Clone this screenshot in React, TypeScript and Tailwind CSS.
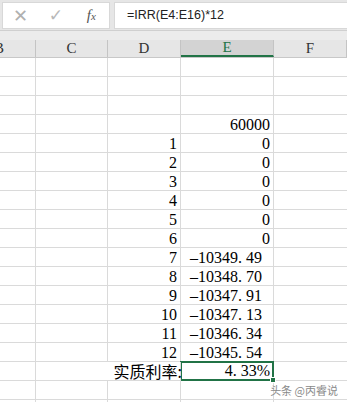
import React from "react";

type Cell = { d?: string; e?: string; neg?: boolean };

const rows: Cell[] = [
  {},
  {},
  {},
  { e: "60000" },
  { d: "1", e: "0" },
  { d: "2", e: "0" },
  { d: "3", e: "0" },
  { d: "4", e: "0" },
  { d: "5", e: "0" },
  { d: "6", e: "0" },
  { d: "7", e: "-10349.49", neg: true },
  { d: "8", e: "-10348.70", neg: true },
  { d: "9", e: "-10347.91", neg: true },
  { d: "10", e: "-10347.13", neg: true },
  { d: "11", e: "-10346.34", neg: true },
  { d: "12", e: "-10345.54", neg: true },
];

// SimSun-like: minus and period take a full digit width
function Num({ v }: { v: string }) {
  return (
    <span>
      {v.split("").map((ch, i) =>
        ch === "-" ? (
          <span key={i} className="inline-block w-[8px] text-center">–</span>
        ) : ch === "." ? (
          <span key={i} className="inline-block w-[8px] text-left">.</span>
        ) : (
          <span key={i}>{ch}</span>
        )
      )}
    </span>
  );
}

const cols = ["B", "C", "D", "E", "F"];
const gridCols = "grid grid-cols-[36px_72px_73px_93px_73px]";
const serif = "font-['Liberation_Serif','DejaVu_Serif',serif]";
const cjk = "font-['Noto_Sans_CJK_SC',sans-serif]";

export default function App() {
  return (
    <div className={`w-[347px] h-[402px] overflow-hidden bg-white relative ${serif}`}>
      {/* Formula bar */}
      <div className="h-[31px] bg-[#e6e6e6] flex pt-[2px] pl-[2px] border-b border-[#d0d0d0]">
        <div className="w-[108px] h-[27px] bg-white border border-[#d8d8d8] flex items-center font-['DejaVu_Sans',sans-serif]">
          <span className="w-[36px] text-center text-[#b0b0b0] text-[18px] leading-none">✕</span>
          <span className="w-[36px] text-center text-[#b8b8b8] text-[17px] leading-none">✓</span>
          <span className={`w-[36px] text-center text-[#555] text-[15px] italic leading-none ${serif}`}>
            f<span className="text-[11px]">x</span>
          </span>
        </div>
        <div className="flex-1 h-[27px] ml-[4px] bg-white border border-[#d8d8d8] border-r-0 flex items-center pl-[12px]">
          <span className="text-[12.5px] text-[#222] font-['Liberation_Sans',sans-serif]">=IRR(E4:E16)*12</span>
        </div>
      </div>
      <div className="h-[9px] bg-[#ececec]" />

      {/* Column headers */}
      <div className={`${gridCols} h-[18px] bg-[#e6e6e6] border-b border-[#c8c8c8]`}>
        {cols.map((c, i) => (
          <div
            key={c}
            className={`flex items-center text-[15px] leading-none border-r border-[#c4c4c4] ${
              c === "E" ? "bg-[#d3d3d3] text-[#217346] border-b-2 border-b-[#217346]" : "text-[#333]"
            } ${i === 0 ? "justify-end pr-[31px]" : "justify-center"}`}
          >
            {c}
          </div>
        ))}
      </div>

      {/* Grid */}
      <div className="text-[16px] text-black">
        {rows.map((r, i) => (
          <div key={i} className={`${gridCols} h-[19px]`}>
            <div className="border-r border-b border-[#dadada]" />
            <div className="border-r border-b border-[#dadada]" />
            <div className="border-r border-b border-[#dadada] flex items-end justify-end pr-[3px] leading-[17px]">{r.d}</div>
            <div className={`border-r border-b border-[#dadada] flex items-end justify-end leading-[17px] ${r.neg ? "pr-[11px]" : "pr-[3px]"}`}>
              {r.e ? <Num v={r.e} /> : null}
            </div>
            <div className="border-b border-[#dadada]" />
          </div>
        ))}

        {/* Result row */}
        <div className={`${gridCols} h-[19px]`}>
          <div className="border-r border-b border-[#dadada]" />
          <div className="border-b border-[#dadada]" />
          <div className="relative z-10 border-r border-b border-[#dadada] flex items-end justify-end whitespace-nowrap">
            <span className={`text-[16px] leading-[17px] -mr-[2px] ${cjk}`}>实质利率:</span>
          </div>
          <div className="relative border-2 border-[#217346] -ml-[1px] -mt-[1px] h-[20px] flex items-end justify-end pr-[2px] leading-[17px]">
            <Num v="4.33%" />
            <div className="absolute -right-[4px] -bottom-[4px] w-[6px] h-[6px] bg-[#217346] border border-white" />
          </div>
          <div className="border-b border-[#dadada]" />
        </div>

        {[0, 1].map((k) => (
          <div key={k} className={`${gridCols} h-[19px]`}>
            <div className="border-r border-b border-[#dadada]" />
            <div className="border-r border-b border-[#dadada]" />
            <div className="border-r border-b border-[#dadada]" />
            <div className="border-r border-b border-[#dadada]" />
            <div className="border-b border-[#dadada]" />
          </div>
        ))}
      </div>

      {/* Watermark */}
      <div className={`absolute right-[9px] bottom-[6px] text-[11px] text-[#8a8a8a] leading-none ${cjk}`}>
        头条 @丙睿说
      </div>
    </div>
  );
}
